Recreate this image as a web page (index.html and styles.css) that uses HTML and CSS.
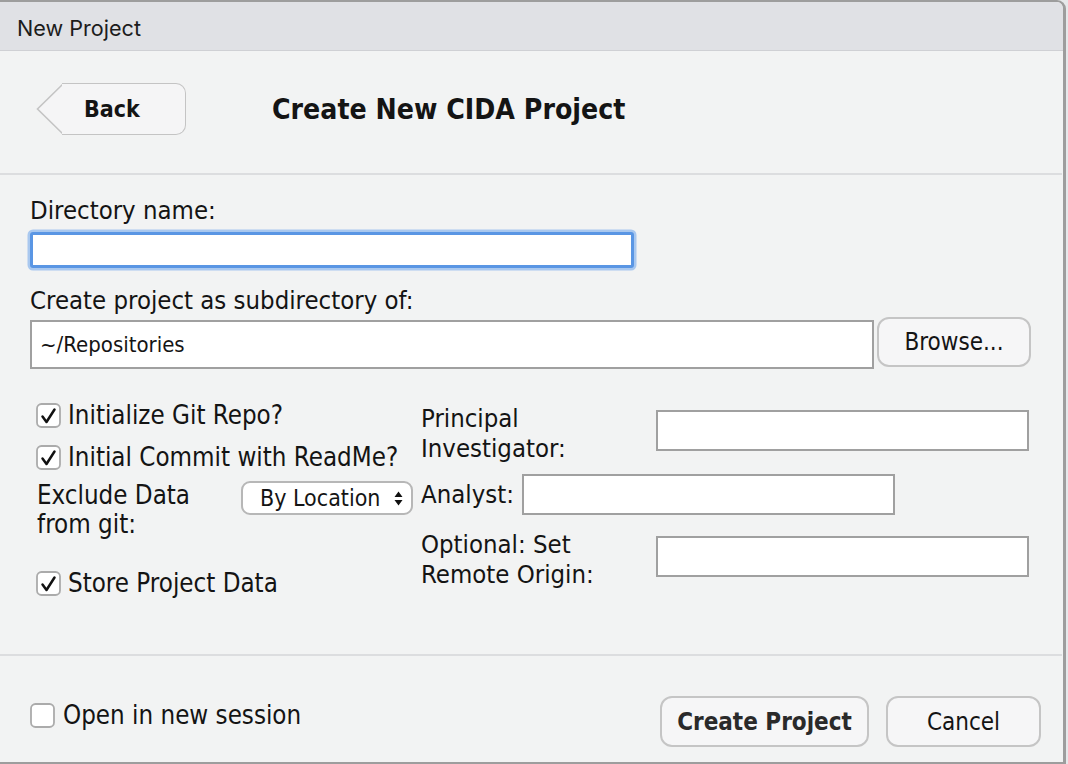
FILE: index.html
```html
<!DOCTYPE html>
<html>
<head>
<meta charset="utf-8">
<title>New Project</title>
<link rel="stylesheet" href="styles.css">
</head>
<body>
<div class="window">
  <div class="titlebar">New Project</div>
  <div class="header">
    <button class="back">
      <svg class="back-tip" viewBox="0 0 27 52" width="27" height="52"><path d="M27 1 L1.5 26 L27 51" fill="#f5f5f6" stroke="#c4c4c4" stroke-width="1.6"/></svg>
      <span class="back-body">Back</span>
    </button>
    <h1 class="title">Create New CIDA Project</h1>
  </div>
  <div class="sep"></div>
  <div class="main">
    <div class="lbl">Directory name:</div>
    <div class="focus-input"></div>
    <div class="lbl lbl2">Create project as subdirectory of:</div>
    <div class="path-row">
      <div class="path-input">~/Repositories</div>
      <button class="btn browse">Browse...</button>
    </div>
    <div class="options">
      <div class="col-left">
        <div class="check-row">
          <svg class="cb" viewBox="0 0 25 25" width="25" height="25"><rect x="1" y="1" width="23" height="23" rx="4.5" fill="#fff" stroke="#ababab" stroke-width="1.8"/><path d="M6.5 13.5 L10.5 19 L18.5 6.5" fill="none" stroke="#111" stroke-width="2.5" stroke-linecap="round" stroke-linejoin="round"/></svg>
          <span class="check-label">Initialize Git Repo?</span>
        </div>
        <div class="check-row">
          <svg class="cb" viewBox="0 0 25 25" width="25" height="25"><rect x="1" y="1" width="23" height="23" rx="4.5" fill="#fff" stroke="#ababab" stroke-width="1.8"/><path d="M6.5 13.5 L10.5 19 L18.5 6.5" fill="none" stroke="#111" stroke-width="2.5" stroke-linecap="round" stroke-linejoin="round"/></svg>
          <span class="check-label">Initial Commit with ReadMe?</span>
        </div>
        <div class="exclude-row">
          <div class="exclude-label">Exclude Data<br>from git:</div>
          <div class="select">
            <span class="select-text">By Location</span>
            <svg class="select-arrows" viewBox="0 0 9 15" width="9" height="15"><path d="M4.5 0.5 L8.5 6 H0.5 Z M4.5 14.5 L8.5 9 H0.5 Z" fill="#111"/></svg>
          </div>
        </div>
        <div class="check-row store">
          <svg class="cb" viewBox="0 0 25 25" width="25" height="25"><rect x="1" y="1" width="23" height="23" rx="4.5" fill="#fff" stroke="#ababab" stroke-width="1.8"/><path d="M6.5 13.5 L10.5 19 L18.5 6.5" fill="none" stroke="#111" stroke-width="2.5" stroke-linecap="round" stroke-linejoin="round"/></svg>
          <span class="check-label">Store Project Data</span>
        </div>
      </div>
      <div class="col-right">
        <div class="field-row two">
          <div class="field-label wide">Principal<br>Investigator:</div>
          <div class="text-input long"></div>
        </div>
        <div class="field-row one">
          <div class="field-label">Analyst:</div>
          <div class="text-input long analyst"></div>
        </div>
        <div class="field-row two remote">
          <div class="field-label wide">Optional: Set<br>Remote Origin:</div>
          <div class="text-input long"></div>
        </div>
      </div>
    </div>
  </div>
  <div class="sep"></div>
  <div class="footer">
    <div class="check-row footer-check">
      <svg class="cb" viewBox="0 0 25 25" width="25" height="25"><rect x="1" y="1" width="23" height="23" rx="4.5" fill="#fff" stroke="#ababab" stroke-width="1.8"/></svg>
      <span class="check-label">Open in new session</span>
    </div>
    <div class="buttons">
      <button class="btn primary">Create Project</button>
      <button class="btn cancel">Cancel</button>
    </div>
  </div>
</div>
</body>
</html>
```

FILE: styles.css
```css
* {
  box-sizing: border-box;
}

html, body {
  margin: 0;
  padding: 0;
}

body {
  width: 1068px;
  height: 764px;
  overflow: hidden;
  background: #e6e8ea;
  font-family: "DejaVu Sans Condensed", "DejaVu Sans", sans-serif;
  font-stretch: condensed;
  color: #141414;
}

.window {
  width: 1066px;
  height: 764px;
  background: #f2f3f3;
  border-top: 2px solid #9d9d9d;
  border-right: 3px solid #9d9d9d;
  border-bottom: 2px solid #9d9d9d;
  border-top-right-radius: 9px;
  overflow: hidden;
  display: flex;
  flex-direction: column;
}

.titlebar {
  flex: none;
  height: 49px;
  background: #e0e1e5;
  border-bottom: 1px solid #cfd0d4;
  padding: 4px 0 0 17px;
  display: flex;
  align-items: center;
  font-family: Inter, "DejaVu Sans", sans-serif;
  font-stretch: normal;
  font-size: 21.6px;
  color: #1c1c1c;
}

.header {
  flex: none;
  height: 122px;
  display: flex;
  align-items: flex-start;
  padding: 32px 0 0 36px;
}

.back {
  display: flex;
  align-items: stretch;
  height: 52px;
  padding: 0;
  margin: 0;
  border: none;
  background: transparent;
  font: inherit;
}

.back-tip {
  display: block;
  flex: none;
}

.back-body {
  width: 124px;
  height: 52px;
  margin-left: -1px;
  background: #f5f5f6;
  border: 1.6px solid #c4c4c4;
  border-left: none;
  border-radius: 0 10px 10px 0;
  display: flex;
  align-items: center;
  padding-left: 22px;
  font-weight: bold;
  font-size: 23px;
  color: #141414;
}

.title {
  margin: 0 0 0 86px;
  line-height: 54px;
  font-size: 28.2px;
  font-weight: bold;
  color: #141414;
}

.sep {
  flex: none;
  height: 2px;
  background: #dcdddf;
  margin-right: 1px;
}

.main {
  flex: 1;
  padding: 20px 0 0 30px;
}

.lbl {
  font-size: 25.5px;
  line-height: 30px;
}

.lbl2 {
  margin-top: 17px;
}

.focus-input {
  margin-top: 7px;
  width: 604px;
  height: 36px;
  background: #fff;
  border: 3px solid #5a96e4;
  border-radius: 3px;
  box-shadow: 0 0 0 2.5px #a9c8ef;
}

.path-row {
  margin-top: 4px;
  display: flex;
  align-items: center;
  height: 50px;
}

.path-input {
  width: 844px;
  height: 49px;
  background: #fff;
  border: 2px solid #a0a0a0;
  padding-left: 8px;
  display: flex;
  align-items: center;
  font-size: 22px;
}

.btn {
  background: #f6f6f7;
  border: 2px solid #c5c5c5;
  border-radius: 12px;
  font-family: inherit;
  font-stretch: condensed;
  font-size: 24px;
  color: #141414;
  padding: 0;
}

.browse {
  margin-left: 3px;
  width: 154px;
  height: 50px;
  margin-top: -4px;
}

.options {
  margin-top: 25px;
  display: flex;
}

.col-left {
  width: 391px;
  flex: none;
}

.check-row {
  display: flex;
  align-items: center;
  height: 42px;
  padding-left: 6px;
}

.cb {
  display: block;
  flex: none;
}

.check-label {
  margin-left: 7px;
  font-size: 25.7px;
  white-space: nowrap;
}

.exclude-row {
  margin-top: 3px;
  display: flex;
  align-items: flex-start;
  padding-left: 7px;
}

.exclude-label {
  width: 204px;
  font-size: 25.7px;
  line-height: 29px;
}

.select {
  width: 172px;
  height: 34px;
  background: #fff;
  border: 2px solid #b7b7b7;
  border-radius: 9px;
  display: flex;
  align-items: center;
  padding: 0 0 0 17px;
  font-size: 23px;
}

.select-text {
  flex: 1;
}

.select-arrows {
  display: block;
  margin-right: 8px;
}

.store {
  margin-top: 23px;
}

.col-right {
  padding-top: 9px;
}

.field-row {
  display: flex;
  align-items: flex-start;
}

.field-label {
  font-size: 25.5px;
  line-height: 41px;
  white-space: nowrap;
}

.field-label.wide {
  width: 235px;
  line-height: 30px;
}

.text-input {
  background: #fff;
  border: 2px solid #a0a0a0;
  height: 41px;
}

.text-input.long {
  width: 373px;
}

.two .text-input {
  margin-top: 7px;
}

.one {
  margin-top: 11px;
}

.analyst {
  margin-left: 8px;
}

.remote {
  margin-top: 14px;
}

.footer {
  flex: none;
  height: 106px;
  display: flex;
  align-items: flex-start;
  padding: 40px 22px 0 30px;
}

.footer-check {
  padding-left: 0;
  height: 36px;
  margin-top: 1px;
}

.footer-check .check-label {
  margin-left: 8px;
}

.buttons {
  margin-left: auto;
  display: flex;
}

.primary {
  width: 209px;
  height: 51px;
  font-weight: bold;
  color: #2a2a2a;
}

.cancel {
  width: 155px;
  height: 51px;
  margin-left: 17px;
}
```
